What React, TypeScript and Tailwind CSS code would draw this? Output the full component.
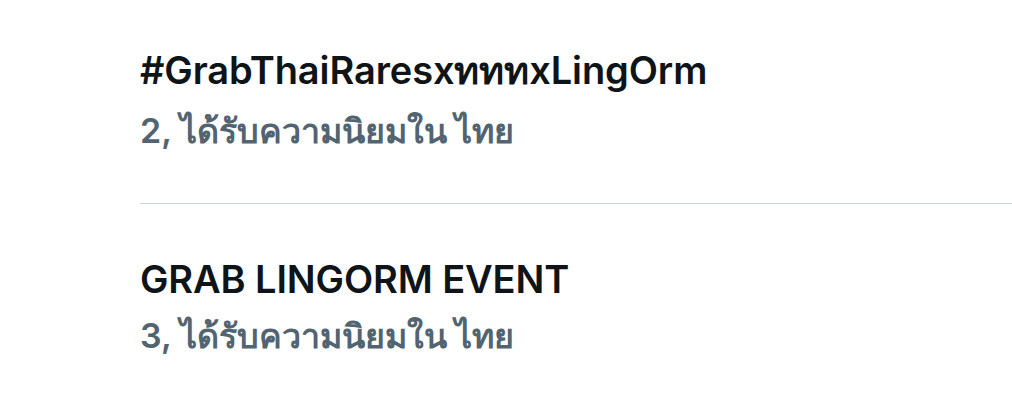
import React from 'react';

interface Trend {
  rank: number;
  name: string;
  place: string;
}

const TRENDS: Trend[] = [
  { rank: 2, name: '#GrabThaiRaresxทททxLingOrm', place: 'ไทย' },
  { rank: 3, name: 'GRAB LINGORM EVENT', place: 'ไทย' },
];

const TrendRow: React.FC<{ trend: Trend; gap: string }> = ({ trend, gap }) => (
  <div className="pl-[140px]">
    <div className="text-[38px] leading-[46px] font-semibold text-[#0f1419] tracking-[-0.1px]">{trend.name}</div>
    <div className={`${gap} text-[34px] leading-[44px] font-semibold text-[#536471]`}>
      {trend.rank}, ได้รับความนิยมใน {trend.place}
    </div>
  </div>
);

export default function App() {
  return (
    <div
      className="w-[1012px] h-[404px] bg-white overflow-hidden pt-[47px]"
      style={{ fontFamily: 'Inter, "Noto Sans", "Noto Sans CJK SC", sans-serif' }}
    >
      <TrendRow trend={TRENDS[0]} gap="mt-[16px]" />
      <div className="ml-[140px] mt-[50px] h-px bg-[#d0d3d5]" />
      <div className="mt-[52px]">
        <TrendRow trend={TRENDS[1]} gap="mt-[12px]" />
      </div>
    </div>
  );
}
